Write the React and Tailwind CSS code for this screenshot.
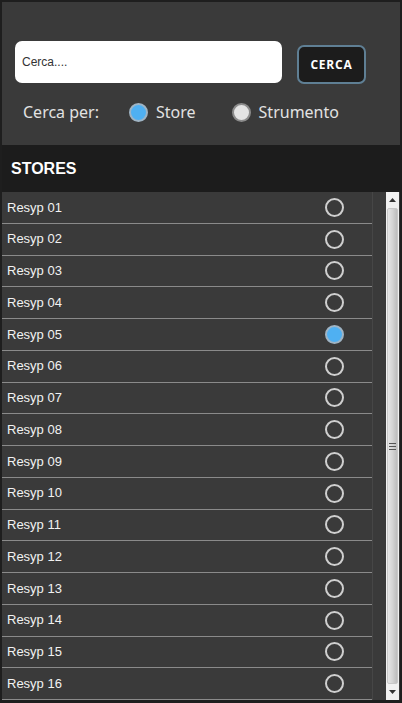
import React, { useState } from "react";

const stores = Array.from({ length: 16 }, (_, i) => `Resyp ${String(i + 1).padStart(2, "0")}`);

const RadioDot = ({ checked, light }) => (
  <div className={`w-[19px] h-[19px] rounded-full border-2 ${checked ? "border-[#9fb4c4] bg-[#4fb0f2]" : light ? "border-[#8c8c8c] bg-[#e4e4e4]" : "border-[#cfcfcf]"}`} />
);

const App = () => {
  const [mode, setMode] = useState("store");
  const [selected, setSelected] = useState("Resyp 05");

  return (
    <div className="w-[402px] h-[703px] bg-[#1e1e1e] px-[2px] pt-[2px] pb-[3px] flex flex-col overflow-hidden" style={{ fontFamily: '"Liberation Sans", Arial, sans-serif' }}>
      {/* search panel */}
      <div className="h-[143px] bg-[#3a3a3a] flex flex-col px-[13px] pt-[39px] shrink-0">
        <div className="flex flex-row items-start">
          <div className="w-[267px] h-[42px] bg-white rounded-[7px] flex items-center px-[7px]">
            <p className="text-[12px] text-[#333]">Cerca....</p>
          </div>
          <div className="ml-[15px] mt-[4px] w-[69px] h-[39px] bg-[#1c1c1c] border-2 border-[#5f7f94] rounded-[7px] flex items-center justify-center">
            <p className="text-[12px] font-bold text-white tracking-[0.8px]" style={{ fontFamily: '"Open Sans", sans-serif' }}>CERCA</p>
          </div>
        </div>
        <div className="flex flex-row items-center mt-[16px] text-[16px] text-[#e2e2e2]" style={{ fontFamily: '"Noto Sans", sans-serif' }}>
          <p className="ml-[8px]">Cerca per:</p>
          <div className="flex flex-row items-center ml-[30px] cursor-pointer" onClick={() => setMode("store")}>
            <RadioDot checked={mode === "store"} light />
            <p className="ml-[8px]">Store</p>
          </div>
          <div className="flex flex-row items-center ml-[36px] cursor-pointer" onClick={() => setMode("strumento")}>
            <RadioDot checked={mode === "strumento"} light />
            <p className="ml-[8px]">Strumento</p>
          </div>
        </div>
      </div>

      {/* header */}
      <div className="h-[47px] bg-[#1c1c1c] flex items-center px-[9px] shrink-0">
        <p className="text-[16px] font-bold text-white">STORES</p>
      </div>

      {/* list */}
      <div className="flex flex-row flex-1 bg-[#3a3a3a] min-h-0">
        <div className="w-[371px] border-r border-[#464646] flex flex-col">
          {stores.map((s) => (
            <div key={s} className="h-[31.75px] shrink-0 border-b border-[#8a8a8a] flex flex-row items-center justify-between pl-[5px] pr-[28px] cursor-pointer" onClick={() => setSelected(s)}>
              <p className="text-[13px] text-[#f2f2f2]">{s}</p>
              <RadioDot checked={selected === s} />
            </div>
          ))}
        </div>
        <div className="flex-1" />
        {/* scrollbar */}
        <div className="w-[13px] bg-[#f1f1f1] flex flex-col mr-[1px]">
          <div className="h-[16px] flex items-center justify-center">
            <svg width="7" height="4" viewBox="0 0 7 4"><path d="M0 4 L3.5 0 L7 4 Z" fill="#333" /></svg>
          </div>
          <div className="flex-1 mx-[1px] rounded-[2px] bg-gradient-to-r from-[#e6e6e6] via-[#d4d4d4] to-[#bdbdbd] border border-[#c8c8c8] flex flex-col items-center justify-center gap-[2px]">
            <div className="w-[7px] h-[1px] bg-[#555]" />
            <div className="w-[7px] h-[1px] bg-[#555]" />
            <div className="w-[7px] h-[1px] bg-[#555]" />
          </div>
          <div className="h-[16px] flex items-center justify-center">
            <svg width="7" height="4" viewBox="0 0 7 4"><path d="M0 0 L3.5 4 L7 0 Z" fill="#333" /></svg>
          </div>
        </div>
      </div>
    </div>
  );
};

export default App;
